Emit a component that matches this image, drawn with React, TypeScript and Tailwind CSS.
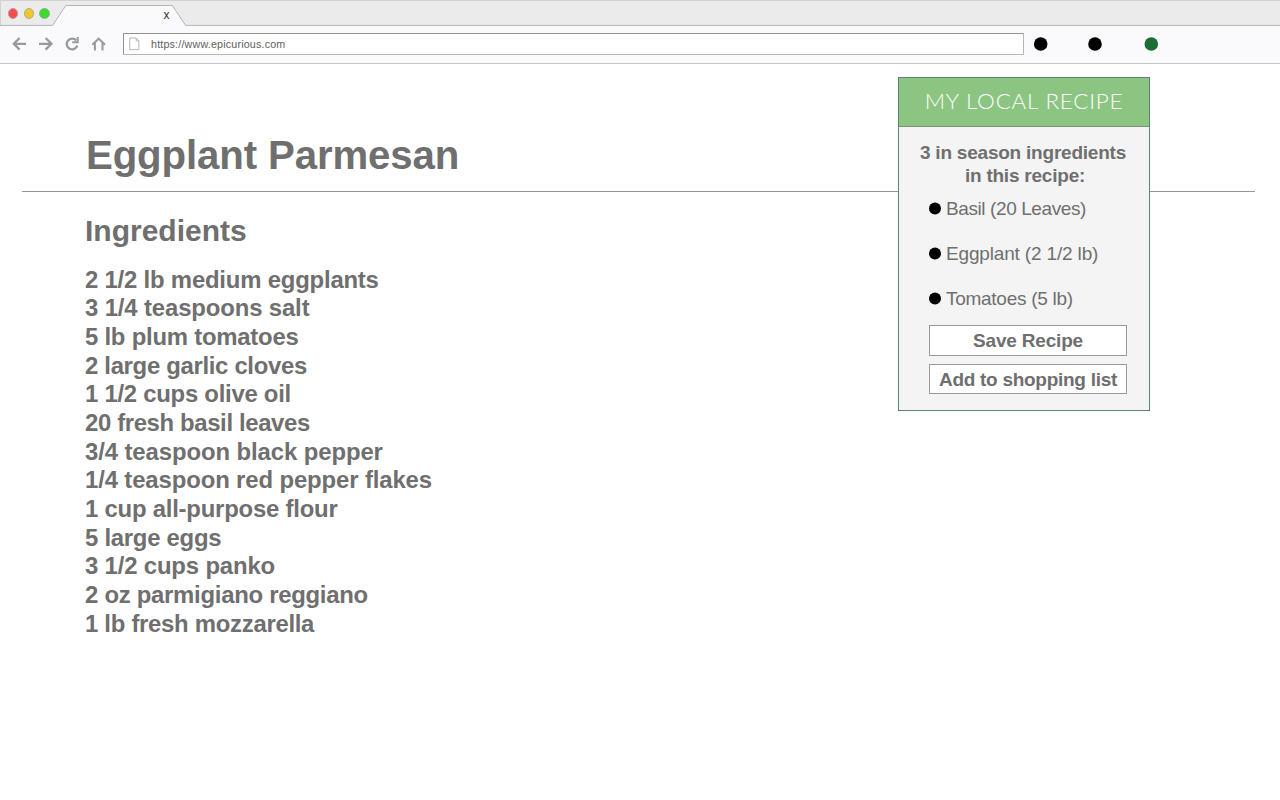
const ingredients = [
  { text: '2 1/2 lb medium eggplants', tracking: 'tracking-[-0.2px]' },
  { text: '3 1/4 teaspoons salt', tracking: 'tracking-[-0.13px]' },
  { text: '5 lb plum tomatoes', tracking: 'tracking-[-0.23px]' },
  { text: '2 large garlic cloves', tracking: 'tracking-[-0.31px]' },
  { text: '1 1/2 cups olive oil', tracking: 'tracking-[-0.26px]' },
  { text: '20 fresh basil leaves', tracking: 'tracking-[-0.36px]' },
  { text: '3/4 teaspoon black pepper', tracking: 'tracking-[-0.09px]' },
  { text: '1/4 teaspoon red pepper flakes', tracking: 'tracking-[-0.12px]' },
  { text: '1 cup all-purpose flour', tracking: 'tracking-[-0.22px]' },
  { text: '5 large eggs', tracking: 'tracking-[-0.26px]' },
  { text: '3 1/2 cups panko', tracking: 'tracking-[-0.16px]' },
  { text: '2 oz parmigiano reggiano', tracking: 'tracking-[-0.27px]' },
  { text: '1 lb fresh mozzarella', tracking: 'tracking-[-0.28px]' },
];

const seasonal = [
  { text: 'Basil (20 Leaves)', tracking: 'tracking-[-0.4px]' },
  { text: 'Eggplant (2 1/2 lb)', tracking: 'tracking-[-0.16px]' },
  { text: 'Tomatoes (5 lb)', tracking: 'tracking-[-0.28px]' },
];

function TabStrip() {
  return (
    <div className="relative flex h-[26px] items-center bg-[#ebebeb]">
      <svg className="absolute inset-0" width="1280" height="26" viewBox="0 0 1280 26" fill="none">
        <path d="M0 .5H1280M.5 0V26" stroke="#d0d3d4" />
        <path d="M52.5 26L65.8 5.5H172.3L185.8 26Z" fill="#fafafc" />
        <path d="M0 25.4H52.6L65.8 5.5H172.3L185.6 25.4H1280" stroke="#b3b5b5" />
      </svg>
      <div className="relative flex gap-[5.6px] pl-[7.8px] pt-[1px]">
        <span className="size-[10.2px] rounded-full border border-[#b5a0a0] bg-[#fc4c50]" />
        <span className="size-[10.2px] rounded-full border border-[#b5ac88] bg-[#efc62c]" />
        <span className="size-[10.2px] rounded-full border border-[#92b092] bg-[#3bdc2d]" />
      </div>
      <span className="relative ml-[114px] pt-[4px] text-[12px] leading-none text-[#333]">x</span>
    </div>
  );
}

function Toolbar() {
  return (
    <div className="flex h-[38px] items-start border-b border-[#c4c6c8] bg-[#fafafc]">
      <svg className="shrink-0" width="123" height="37" viewBox="0 26 123 37" fill="none" stroke="#969a9a" strokeWidth="2.3">
        <path d="M26 43.8H14M19.6 38L13.8 43.8L19.6 49.6" />
        <path d="M39 43.8H51M45.6 38L51.4 43.8L45.6 49.6" />
        <path d="M76.2 40.4A5.4 5.4 0 1 0 77.3 45.6" />
        <path d="M77.7 37V42.2H72.2" strokeWidth="2" />
        <path d="M92.4 44.8L98.7 38.6L105 44.8M94.9 43V50.4M102.5 43V50.4" strokeWidth="2" />
      </svg>
      <div className="mt-[7px] flex h-[22px] w-[901px] items-center rounded-[1px] border border-[#8f9193] border-b-[#b5b7b8] border-r-[#b5b7b8] bg-white pl-[5px]">
        <svg width="11" height="14" viewBox="0 0 11 14" fill="none" stroke="#b5b7b9">
          <path d="M.7 1H7.2L9.9 3.8V12.7H.7ZM7.2 1V3.8H9.9" />
        </svg>
        <span className="ml-[11px] pt-px text-[10.7px] leading-none tracking-[0.19px] text-[#606060]">
          https://www.epicurious.com
        </span>
      </div>
      <svg className="ml-[9px] mt-[11px]" width="126" height="14" viewBox="0 0 126 14">
        <circle cx="7.7" cy="7" r="6.8" />
        <circle cx="62" cy="7" r="6.8" />
        <circle cx="118.3" cy="7" r="6.8" fill="#1b6c36" />
      </svg>
    </div>
  );
}

function RecipePanel() {
  return (
    <aside className="absolute left-[898px] top-[13px] h-[334px] w-[252px] border border-[#588473] bg-[#f4f4f4]">
      <h2 className="flex h-[49px] items-center justify-center whitespace-nowrap border-b border-[#7b8f78] bg-[#8cc582] pb-[3px] font-[Lato,sans-serif] text-[22.4px] font-light tracking-[0.8px] text-white">
        MY LOCAL RECIPE
      </h2>
      <p className="pt-[14px] text-center text-[19px] font-bold leading-[23px] tracking-[-0.22px]">
        <span className="block -translate-x-[1px] whitespace-nowrap">3 in season ingredients</span>
        <span className="block translate-x-[1px]">in this recipe:</span>
      </p>
      <ul className="flex flex-col gap-[22px] pl-[30px] pt-[10px]">
        {seasonal.map((item) => (
          <li key={item.text} className="flex h-[23px] items-center text-[19px] leading-[23px]">
            <span className="mr-[5px] size-[12px] -translate-y-[0.5px] rounded-full bg-black" />
            <span className={item.tracking}>{item.text}</span>
          </li>
        ))}
      </ul>
      <div className="flex flex-col gap-[8px] pl-[30px] pt-[15px]">
        <button className="h-[31px] w-[198px] border border-[#999] bg-white text-[19px] font-bold leading-none tracking-[-0.18px]">
          Save Recipe
        </button>
        <button className="h-[30px] w-[198px] whitespace-nowrap border border-[#999] bg-white text-[19px] font-bold leading-none tracking-[-0.28px]">
          Add to shopping list
        </button>
      </div>
    </aside>
  );
}

export default function App() {
  return (
    <div className="h-[800px] w-[1280px] overflow-hidden bg-white font-['Liberation_Sans',Arial,sans-serif] text-[#6f6f6f]">
      <TabStrip />
      <Toolbar />
      <main className="relative">
        <header className="ml-[22px] mr-[25px] h-[128px] border-b border-[#969696] pl-[64px] pt-[68px]">
          <h1 className="text-[40.2px] font-bold leading-[48px] tracking-[-0.12px]">Eggplant Parmesan</h1>
        </header>
        <section className="pl-[85px] pt-[21px] font-bold">
          <h2 className="text-[30px] leading-[36px]">Ingredients</h2>
          <ul className="pt-[16.5px] text-[23.9px] leading-[28.68px]">
            {ingredients.map((item) => (
              <li key={item.text} className={item.tracking}>
                {item.text}
              </li>
            ))}
          </ul>
        </section>
        <RecipePanel />
      </main>
    </div>
  );
}
